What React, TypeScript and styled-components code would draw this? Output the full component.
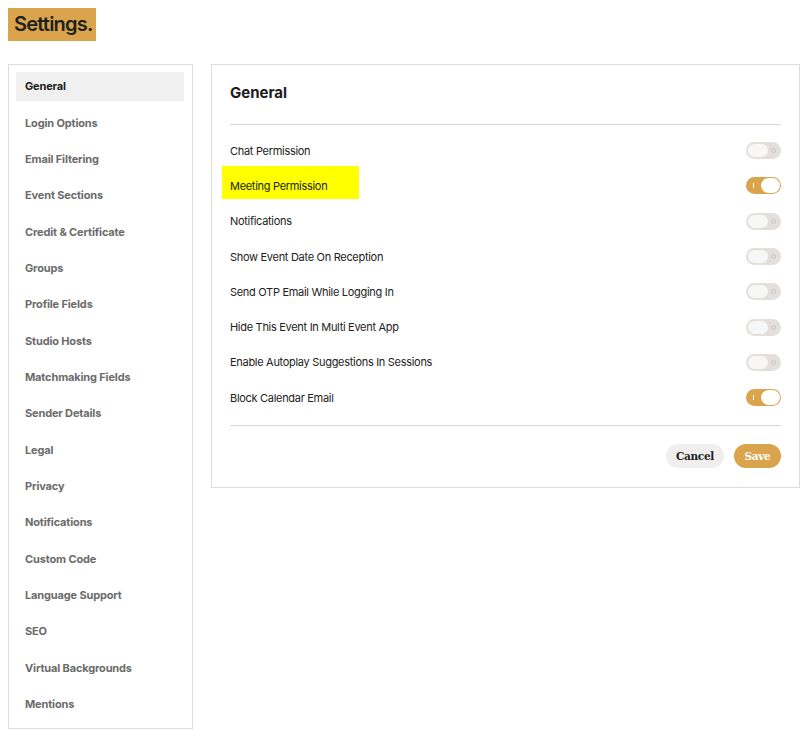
import React from "react";
import styled, { createGlobalStyle } from "styled-components";

const GOLD = "#d9a44b";

const Global = createGlobalStyle`
  html, body { padding: 0; background: #fff; }
  html { margin: 0; }
  body { margin: 8px 0 8px 8px; font-family: Inter, "Open Sans", sans-serif; color: #222; }
  * { box-sizing: border-box; }
`;

const Page = styled.div`
  display: flex;
  flex-direction: column;
  gap: 23px;
`;

const TitleBadge = styled.h1`
  align-self: flex-start;
  margin: -1px 0 0;
  background: ${GOLD};
  color: #1f1f1f;
  font-size: 20px;
  font-weight: 600;
  line-height: 34px;
  height: 34px;
  padding: 0 4px 0 6px;
  letter-spacing: -0.8px;
`;

const Layout = styled.div`
  display: flex;
  align-items: flex-start;
  gap: 18px;
`;

const Sidebar = styled.nav`
  width: 185px;
  flex-shrink: 0;
  border: 1px solid #dcdcdc;
  padding: 7px 8px 9px 7px;
  display: flex;
  flex-direction: column;
  gap: 7px;
`;

const NavItem = styled.div<{ $active?: boolean }>`
  height: 29.35px;
  display: flex;
  align-items: center;
  padding: 0 0 1px 9px;
  font-size: 11px;
  font-weight: 700;
  letter-spacing: -0.15px;
  color: ${(p) => (p.$active ? "#1c1c1c" : "#6b6b6b")};
  background: ${(p) => (p.$active ? "#f0f0f0" : "transparent")};
`;

const Panel = styled.section`
  flex: 1;
  border: 1px solid #dcdcdc;
  padding: 19px 18px 19px;
  display: flex;
  flex-direction: column;
`;

const PanelTitle = styled.h2`
  margin: 0;
  font-size: 15px;
  font-weight: 700;
  line-height: 18px;
  color: #1c1c1c;
`;

const Divider = styled.hr<{ $top: number; $bottom: number }>`
  border: 0;
  border-top: 1px solid #d9d9d9;
  margin: ${(p) => p.$top}px 0 ${(p) => p.$bottom}px;
`;

const Row = styled.div`
  height: 35.3px;
  display: flex;
  align-items: center;
  justify-content: space-between;
`;

const Label = styled.span<{ $highlight?: boolean }>`
  margin-left: -8px;
  margin-top: -7px;
  padding: 12px 8px 5px;
  line-height: 16px;
  font-size: 11px;
  letter-spacing: -0.3px;
  color: #222;
  background: ${(p) => (p.$highlight ? "#ffff00" : "transparent")};
  width: ${(p) => (p.$highlight ? "137px" : "auto")};
`;

const Toggle = styled.span<{ $on?: boolean }>`
  position: relative;
  width: 35px;
  height: 17px;
  border-radius: 9px;
  background: ${(p) => (p.$on ? GOLD : "#e3e0dc")};
  flex-shrink: 0;
`;

const Knob = styled.span<{ $on?: boolean }>`
  position: absolute;
  top: ${(p) => (p.$on ? "1px" : "2px")};
  left: ${(p) => (p.$on ? "15px" : "2px")};
  width: ${(p) => (p.$on ? "19px" : "20px")};
  height: ${(p) => (p.$on ? "15px" : "13px")};
  border-radius: 8px;
  background: ${(p) => (p.$on ? "#fff" : "#f7f7f7")};
`;

const OffMark = styled.span`
  position: absolute;
  right: 5px;
  top: 6px;
  width: 5px;
  height: 5px;
  border-radius: 50%;
  border: 1px solid #c8c5c1;
`;

const OnMark = styled.span`
  position: absolute;
  left: 7px;
  top: 6px;
  width: 1px;
  height: 5px;
  background: #fff;
`;

const Actions = styled.div`
  display: flex;
  justify-content: flex-end;
  gap: 10px;
`;

const Button = styled.button<{ $primary?: boolean }>`
  height: 24px;
  border: 0;
  border-radius: 12px;
  padding: 0;
  width: ${(p) => (p.$primary ? "47px" : "58px")};
  font-family: "DejaVu Serif", "Liberation Serif", serif;
  font-size: 10.5px;
  font-weight: 700;
  letter-spacing: -0.3px;
  background: ${(p) => (p.$primary ? GOLD : "#f0efed")};
  color: ${(p) => (p.$primary ? "#fff" : "#222")};
`;

const navItems = [
  "General",
  "Login Options",
  "Email Filtering",
  "Event Sections",
  "Credit & Certificate",
  "Groups",
  "Profile Fields",
  "Studio Hosts",
  "Matchmaking Fields",
  "Sender Details",
  "Legal",
  "Privacy",
  "Notifications",
  "Custom Code",
  "Language Support",
  "SEO",
  "Virtual Backgrounds",
  "Mentions",
];

const settings: { label: string; on: boolean; highlight?: boolean }[] = [
  { label: "Chat Permission", on: false },
  { label: "Meeting Permission", on: true, highlight: true },
  { label: "Notifications", on: false },
  { label: "Show Event Date On Reception", on: false },
  { label: "Send OTP Email While Logging In", on: false },
  { label: "Hide This Event In Multi Event App", on: false },
  { label: "Enable Autoplay Suggestions In Sessions", on: false },
  { label: "Block Calendar Email", on: true },
];

export default function App() {
  return (
    <>
      <Global />
      <Page>
        <TitleBadge>Settings.</TitleBadge>
        <Layout>
          <Sidebar>
            {navItems.map((n, i) => (
              <NavItem key={n} $active={i === 0}>
                {n}
              </NavItem>
            ))}
          </Sidebar>
          <Panel>
            <PanelTitle>General</PanelTitle>
            <Divider $top={22} $bottom={8} />
            {settings.map((s) => (
              <Row key={s.label}>
                <Label $highlight={s.highlight}>{s.label}</Label>
                <Toggle $on={s.on}>
                  {s.on ? <OnMark /> : <OffMark />}
                  <Knob $on={s.on} />
                </Toggle>
              </Row>
            ))}
            <Divider $top={10} $bottom={18} />
            <Actions>
              <Button>Cancel</Button>
              <Button $primary>Save</Button>
            </Actions>
          </Panel>
        </Layout>
      </Page>
    </>
  );
}
